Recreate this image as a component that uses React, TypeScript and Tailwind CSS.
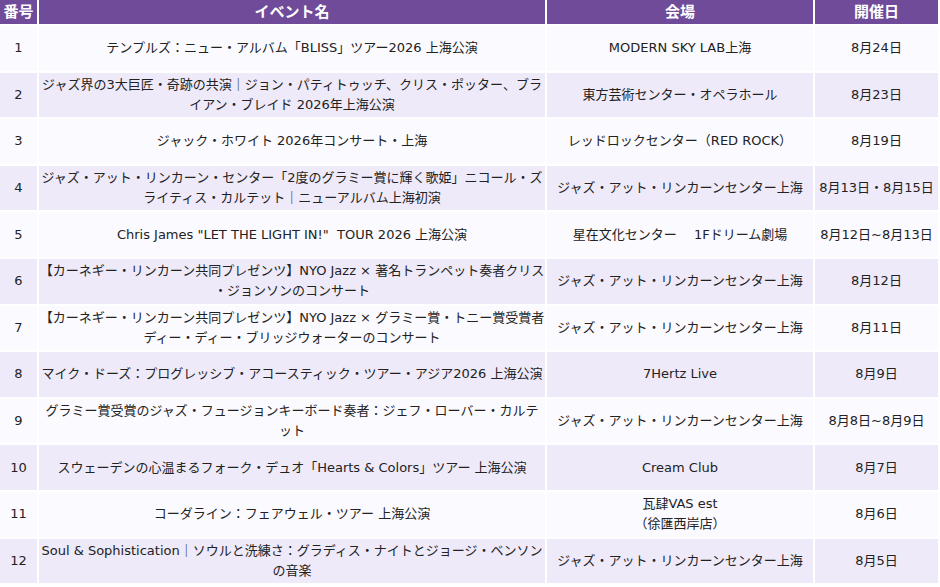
import React from "react";

type Row = { no: string; event: string[]; venue: string[]; date: string };

const rows: Row[] = [
  { no: "1", event: ["テンプルズ：ニュー・アルバム「BLISS」ツアー2026 上海公演"], venue: ["MODERN SKY LAB上海"], date: "8月24日" },
  { no: "2", event: ["ジャズ界の3大巨匠・奇跡の共演｜ジョン・パティトゥッチ、クリス・ポッター、ブラ", "イアン・ブレイド 2026年上海公演"], venue: ["東方芸術センター・オペラホール"], date: "8月23日" },
  { no: "3", event: ["ジャック・ホワイト 2026年コンサート・上海"], venue: ["レッドロックセンター（RED ROCK）"], date: "8月19日" },
  { no: "4", event: ["ジャズ・アット・リンカーン・センター「2度のグラミー賞に輝く歌姫」ニコール・ズ", "ライティス・カルテット｜ニューアルバム上海初演"], venue: ["ジャズ・アット・リンカーンセンター上海"], date: "8月13日・8月15日" },
  { no: "5", event: ["Chris James \"LET THE LIGHT IN!\"\u00a0 TOUR 2026 上海公演"], venue: ["星在文化センター\u3000 1Fドリーム劇場"], date: "8月12日~8月13日" },
  { no: "6", event: ["【カーネギー・リンカーン共同プレゼンツ】NYO Jazz × 著名トランペット奏者クリス", "・ジョンソンのコンサート"], venue: ["ジャズ・アット・リンカーンセンター上海"], date: "8月12日" },
  { no: "7", event: ["【カーネギー・リンカーン共同プレゼンツ】NYO Jazz × グラミー賞・トニー賞受賞者", "ディー・ディー・ブリッジウォーターのコンサート"], venue: ["ジャズ・アット・リンカーンセンター上海"], date: "8月11日" },
  { no: "8", event: ["マイク・ドーズ：プログレッシブ・アコースティック・ツアー・アジア2026 上海公演"], venue: ["7Hertz Live"], date: "8月9日" },
  { no: "9", event: ["グラミー賞受賞のジャズ・フュージョンキーボード奏者：ジェフ・ローバー・カルテ", "ット"], venue: ["ジャズ・アット・リンカーンセンター上海"], date: "8月8日~8月9日" },
  { no: "10", event: ["スウェーデンの心温まるフォーク・デュオ「Hearts & Colors」ツアー 上海公演"], venue: ["Cream Club"], date: "8月7日" },
  { no: "11", event: ["コーダライン：フェアウェル・ツアー 上海公演"], venue: ["瓦肆VAS est", "（徐匯西岸店）"], date: "8月6日" },
  { no: "12", event: ["Soul & Sophistication｜ソウルと洗練さ：グラディス・ナイトとジョージ・ベンソン", "の音楽"], venue: ["ジャズ・アット・リンカーンセンター上海"], date: "8月5日" },
];

function Lines({ lines }: { lines: string[] }) {
  return (
    <>
      {lines.map((l, i) => (
        <span key={i} className="block whitespace-pre">
          {l}
        </span>
      ))}
    </>
  );
}

export default function App() {
  const head = "bg-[#6f4b99] text-white font-bold text-[15px] flex items-center justify-center leading-none";
  return (
    <div
      className="w-[940px] h-[587px] bg-white overflow-hidden"
      style={{ fontFamily: '"DejaVu Sans", "Noto Sans CJK JP", sans-serif' }}
    >
      <div className="grid grid-cols-[37px_506px_266px_123px] grid-rows-[24px_repeat(12,44.6px)] gap-[2px] text-[13px] leading-[20px] text-[#222]">
        <div className={head}>番号</div>
        <div className={head}>イベント名</div>
        <div className={head}>会場</div>
        <div className={head}>開催日</div>
        {rows.map((r, idx) => {
          const bg = idx % 2 === 0 ? "bg-[#fbfaff]" : "bg-[#efeaf9]";
          const cell = `${bg} flex flex-col items-center justify-center text-center`;
          return (
            <React.Fragment key={r.no}>
              <div className={cell}>{r.no}</div>
              <div className={cell}>
                <Lines lines={r.event} />
              </div>
              <div className={cell}>
                <Lines lines={r.venue} />
              </div>
              <div className={cell}>{r.date}</div>
            </React.Fragment>
          );
        })}
      </div>
    </div>
  );
}
